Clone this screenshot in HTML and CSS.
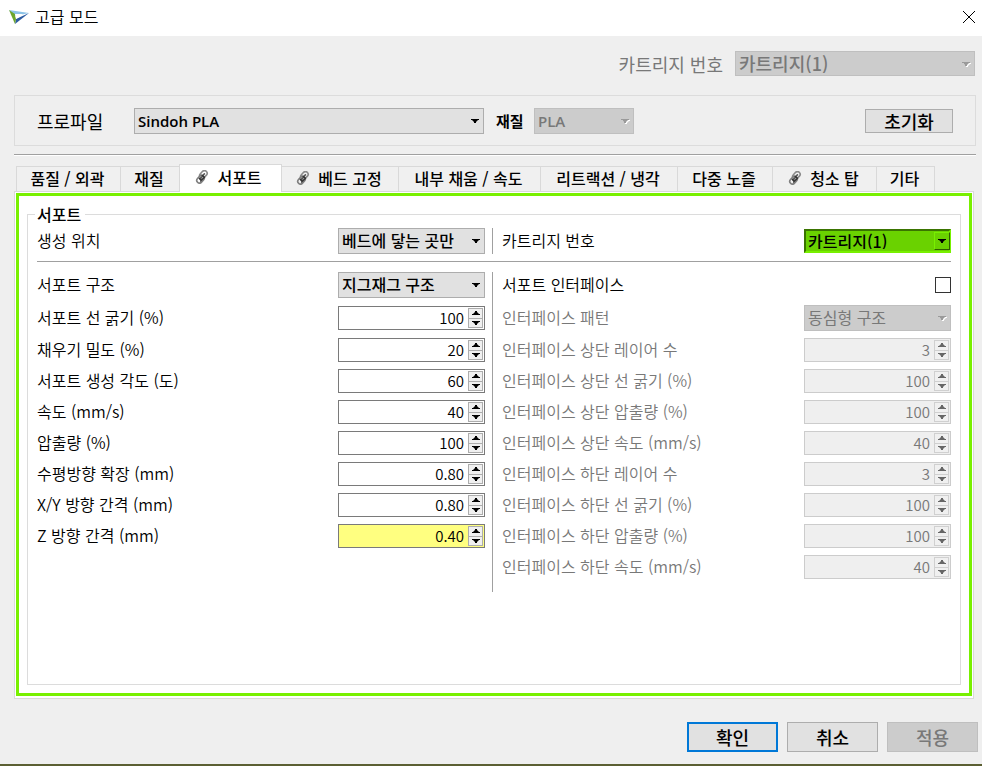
FILE: index.html
```html
<!DOCTYPE html>
<html lang="ko">
<head>
<meta charset="utf-8">
<meta name="viewport" content="width=device-width, initial-scale=1">
<title>고급 모드</title>
<link rel="stylesheet" href="styles.css">
</head>
<body>
<svg class="defs" aria-hidden="true">
  <symbol id="down" viewBox="0 0 8 4"><path d="M0 0h8v1H7L5 3v1H3V3L1 1H0z"/></symbol>
  <symbol id="up" viewBox="0 0 8 4"><path d="M3 0h2v1l2 2h1v1H0V3h1l2-2z"/></symbol>
  <symbol id="clip" viewBox="0 0 14 14">
    <g fill="none" stroke-linecap="round">
      <rect x="5.7" y="0.2" width="5.4" height="8.4" rx="2.7" transform="rotate(42 8.4 4.4)" stroke="#8a8a8a" stroke-width="1.6"/>
      <rect x="2.8" y="5" width="5.4" height="8.4" rx="2.7" transform="rotate(42 5.5 9.2)" stroke="#808080" stroke-width="1.6"/>
      <path d="M9.4 3.8L5 8.9" stroke="#555" stroke-width="1.6"/>
      <path d="M9.6 7.2L5.6 11M7.2 5.4l2.2 1.8M4.2 8.2l2 2" stroke="#333" stroke-width="1.3"/>
    </g>
  </symbol>
</svg>
<header class="titlebar">
  <svg class="logo" viewBox="0 0 20 15" aria-hidden="true">
    <path d="M0 0l20 3-14 3z" fill="#8cc3e8"/>
    <path d="M20 3L6 14l1-5z" fill="#2c5aa0"/>
    <path d="M0 0l6 4 1 5-1 5z" fill="#6ca52c"/>
    <path d="M6 4l8 0-7 5z" fill="#fff"/>
  </svg>
  <h1 class="title">고급 모드</h1>
  <button class="close" aria-label="닫기"><svg viewBox="0 0 12 12"><path d="M0 0l12 12M12 0L0 12" stroke="#000" fill="none"/></svg></button>
</header>
<main class="dialog">
  <div class="cartridge">
    <label for="cart">카트리지 번호</label>
    <span class="combo"><select id="cart" disabled><option>카트리지(1)</option></select><svg><use href="#down"/></svg></span>
  </div>
  <section class="profile">
    <label class="profile-label" for="profile">프로파일</label>
    <span class="combo latin profile-combo"><select id="profile"><option>Sindoh PLA</option></select><svg><use href="#down"/></svg></span>
    <label class="material-label" for="material">재질</label>
    <span class="combo latin material-combo"><select id="material" disabled><option>PLA</option></select><svg><use href="#down"/></svg></span>
    <button class="btn reset">초기화</button>
  </section>
  <hr class="divider">
  <div class="tabs" role="tablist">
    <button class="tab" role="tab">품질 / 외곽</button>
    <button class="tab" role="tab">재질</button>
    <button class="tab active" role="tab" aria-selected="true"><svg><use href="#clip"/></svg>서포트</button>
    <button class="tab" role="tab"><svg><use href="#clip"/></svg>베드 고정</button>
    <button class="tab" role="tab">내부 채움 / 속도</button>
    <button class="tab" role="tab">리트랙션 / 냉각</button>
    <button class="tab" role="tab">다중 노즐</button>
    <button class="tab" role="tab"><svg><use href="#clip"/></svg>청소 탑</button>
    <button class="tab" role="tab">기타</button>
  </div>
  <div class="panel" role="tabpanel">
    <div class="highlight">
      <fieldset class="group">
        <legend>서포트</legend>
        <div class="columns first">
          <div class="fields">
            <div class="row"><label for="pos">생성 위치</label><span class="combo"><select id="pos"><option>베드에 닿는 곳만</option></select><svg><use href="#down"/></svg></span></div>
          </div>
          <div class="fields">
            <div class="row"><label for="cart2">카트리지 번호</label><span class="combo green"><select id="cart2"><option>카트리지(1)</option></select><svg><use href="#down"/></svg></span></div>
          </div>
        </div>
        <div class="columns">
          <div class="fields">
            <div class="row tall"><label for="struct">서포트 구조</label><span class="combo"><select id="struct"><option>지그재그 구조</option></select><svg><use href="#down"/></svg></span></div>
            <div class="row tall"><label for="a1">서포트 선 굵기 (%)</label><span class="spin"><input id="a1" type="number" value="100"><span class="steps"><button aria-label="증가"><svg><use href="#up"/></svg></button><button aria-label="감소"><svg><use href="#down"/></svg></button></span></span></div>
            <div class="row"><label for="a2">채우기 밀도 (%)</label><span class="spin"><input id="a2" type="number" value="20"><span class="steps"><button aria-label="증가"><svg><use href="#up"/></svg></button><button aria-label="감소"><svg><use href="#down"/></svg></button></span></span></div>
            <div class="row"><label for="a3">서포트 생성 각도 (도)</label><span class="spin"><input id="a3" type="number" value="60"><span class="steps"><button aria-label="증가"><svg><use href="#up"/></svg></button><button aria-label="감소"><svg><use href="#down"/></svg></button></span></span></div>
            <div class="row"><label for="a4">속도 (mm/s)</label><span class="spin"><input id="a4" type="number" value="40"><span class="steps"><button aria-label="증가"><svg><use href="#up"/></svg></button><button aria-label="감소"><svg><use href="#down"/></svg></button></span></span></div>
            <div class="row"><label for="a5">압출량 (%)</label><span class="spin"><input id="a5" type="number" value="100"><span class="steps"><button aria-label="증가"><svg><use href="#up"/></svg></button><button aria-label="감소"><svg><use href="#down"/></svg></button></span></span></div>
            <div class="row"><label for="a6">수평방향 확장 (mm)</label><span class="spin"><input id="a6" type="number" step="0.01" value="0.80"><span class="steps"><button aria-label="증가"><svg><use href="#up"/></svg></button><button aria-label="감소"><svg><use href="#down"/></svg></button></span></span></div>
            <div class="row"><label for="a7">X/Y 방향 간격 (mm)</label><span class="spin"><input id="a7" type="number" step="0.01" value="0.80"><span class="steps"><button aria-label="증가"><svg><use href="#up"/></svg></button><button aria-label="감소"><svg><use href="#down"/></svg></button></span></span></div>
            <div class="row"><label for="a8">Z 방향 간격 (mm)</label><span class="spin changed"><input id="a8" type="number" step="0.01" value="0.40"><span class="steps"><button aria-label="증가"><svg><use href="#up"/></svg></button><button aria-label="감소"><svg><use href="#down"/></svg></button></span></span></div>
          </div>
          <div class="fields">
            <div class="row tall"><label for="iface">서포트 인터페이스</label><input class="check" id="iface" type="checkbox"></div>
            <div class="row tall off"><label for="pattern">인터페이스 패턴</label><span class="combo"><select id="pattern" disabled><option>동심형 구조</option></select><svg><use href="#down"/></svg></span></div>
            <div class="row off"><label for="b1">인터페이스 상단 레이어 수</label><span class="spin"><input id="b1" type="number" value="3" disabled><span class="steps"><button aria-label="증가" disabled><svg><use href="#up"/></svg></button><button aria-label="감소" disabled><svg><use href="#down"/></svg></button></span></span></div>
            <div class="row off"><label for="b2">인터페이스 상단 선 굵기 (%)</label><span class="spin"><input id="b2" type="number" value="100" disabled><span class="steps"><button aria-label="증가" disabled><svg><use href="#up"/></svg></button><button aria-label="감소" disabled><svg><use href="#down"/></svg></button></span></span></div>
            <div class="row off"><label for="b3">인터페이스 상단 압출량 (%)</label><span class="spin"><input id="b3" type="number" value="100" disabled><span class="steps"><button aria-label="증가" disabled><svg><use href="#up"/></svg></button><button aria-label="감소" disabled><svg><use href="#down"/></svg></button></span></span></div>
            <div class="row off"><label for="b4">인터페이스 상단 속도 (mm/s)</label><span class="spin"><input id="b4" type="number" value="40" disabled><span class="steps"><button aria-label="증가" disabled><svg><use href="#up"/></svg></button><button aria-label="감소" disabled><svg><use href="#down"/></svg></button></span></span></div>
            <div class="row off"><label for="b5">인터페이스 하단 레이어 수</label><span class="spin"><input id="b5" type="number" value="3" disabled><span class="steps"><button aria-label="증가" disabled><svg><use href="#up"/></svg></button><button aria-label="감소" disabled><svg><use href="#down"/></svg></button></span></span></div>
            <div class="row off"><label for="b6">인터페이스 하단 선 굵기 (%)</label><span class="spin"><input id="b6" type="number" value="100" disabled><span class="steps"><button aria-label="증가" disabled><svg><use href="#up"/></svg></button><button aria-label="감소" disabled><svg><use href="#down"/></svg></button></span></span></div>
            <div class="row off"><label for="b7">인터페이스 하단 압출량 (%)</label><span class="spin"><input id="b7" type="number" value="100" disabled><span class="steps"><button aria-label="증가" disabled><svg><use href="#up"/></svg></button><button aria-label="감소" disabled><svg><use href="#down"/></svg></button></span></span></div>
            <div class="row off"><label for="b8">인터페이스 하단 속도 (mm/s)</label><span class="spin"><input id="b8" type="number" value="40" disabled><span class="steps"><button aria-label="증가" disabled><svg><use href="#up"/></svg></button><button aria-label="감소" disabled><svg><use href="#down"/></svg></button></span></span></div>
          </div>
        </div>
      </fieldset>
    </div>
  </div>
  <footer class="actions">
    <button class="btn primary">확인</button>
    <button class="btn">취소</button>
    <button class="btn" disabled>적용</button>
  </footer>
</main>
</body>
</html>
```
FILE: styles.css
```css
* { box-sizing: border-box; }

body {
  margin: 0;
  min-height: 100vh;
  display: flex;
  flex-direction: column;
  background: #efefef;
  border-bottom: 2px solid #5b5f33;
  color: #000;
  font: 350 16px/20px "Noto Sans CJK KR", sans-serif;
}

button, select, input { font: inherit; color: inherit; margin: 0; border-radius: 0; }
.defs { display: none; }

.titlebar {
  height: 36px;
  padding: 0 7px 2px 9px;
  display: flex;
  align-items: center;
  background: #fff;
}
.logo { width: 20px; height: 15px; }
.title { flex: 1; margin: 0 0 0 6px; padding-bottom: 2px; font-size: 16px; font-weight: 350; }
.close { padding: 0; border: 0; background: none; display: flex; }
.close svg { width: 12px; height: 12px; overflow: visible; }

.dialog { flex: 1; display: flex; flex-direction: column; }

.cartridge {
  display: flex;
  justify-content: flex-end;
  align-items: center;
  gap: 12px;
  padding: 15px 7px 19px;
  font-size: 18px;
  font-weight: 400;
  color: #787878;
}
.cartridge .combo { width: 240px; height: 25px; }

.combo { position: relative; display: block; width: 147px; height: 26px; font-weight: 500; }
.combo select {
  appearance: none;
  display: block;
  width: 100%;
  height: 100%;
  padding: 0 20px 2px 3px;
  border: 1px solid #adadad;
  background: #e1e1e1;
  line-height: 20px;
}
.combo select:disabled { background: #ccc; border-color: #bfbfbf; color: #787878; opacity: 1; }
.combo svg { position: absolute; right: 5px; top: 11px; width: 8px; height: 4px; pointer-events: none; }
.combo select:disabled + svg { fill: #9a9a9a; filter: drop-shadow(1px 1px 0 #fff); }
.off .combo { font-weight: 400; }
.latin { font: 600 15px/20px "Open Sans", sans-serif; }
.latin select { padding-bottom: 0; }
.green { height: 24px; }
.green select { background: #6ad200; border: 2px solid; border-color: #3a7400 #78f000 #78f000 #3a7400; padding-left: 2px; }
.green svg { right: 1px; top: 3px; width: 16px; height: 18px; padding: 6px 3px; border: 1px solid; border-color: #78f000 #2f5e00 #2f5e00 #78f000; }

.profile {
  display: flex;
  align-items: center;
  height: 51px;
  margin: 0 6px 0 14px;
  padding: 0 22px;
  border: 1px solid #dcdcdc;
}
.profile-label { width: 97px; font-size: 18px; font-weight: 400; }
.profile-combo { width: 350px; }
.material-label { margin: 0 8px 0 12px; width: 30px; font-size: 15px; font-weight: 700; }
.material-combo { width: 100px; }

.btn {
  width: 91px;
  height: 30px;
  padding: 0;
  border: 1px solid #adadad;
  background: #e1e1e1;
  font-size: 18px;
  font-weight: 500;
}
.btn:disabled { background: #ccc; border-color: #bfbfbf; color: #787878; }
.primary { border: 2px solid #0078d7; }
.reset { width: 88px; height: 24px; margin-left: auto; line-height: 20px; }

.divider { height: 2px; margin: 8px 6px 8px 14px; border: 0; border-top: 1px solid #a0a0a0; background: #fff; }

.tabs {
  display: grid;
  grid-template-columns: 105fr 59fr 102fr 117fr 142fr 137fr 95fr 104fr 58fr;
  align-items: end;
  height: 27px;
  margin: 0 47px 0 16px;
}
.tab {
  display: flex;
  align-items: center;
  justify-content: center;
  gap: 8px;
  height: 25px;
  padding: 0 2px 2px 0;
  border: 1px solid #d9d9d9;
  border-width: 1px 1px 0 0;
  background: #f0f0f0;
  font-weight: 500;
  white-space: nowrap;
}
.tab:first-child { border-left-width: 1px; }
.tab svg { width: 14px; height: 14px; }
.active { height: 28px; margin: 0 0 -1px -1px; padding: 0 4px 4px 0; border-left-width: 1px; background: #fff; position: relative; }

.panel {
  flex: 1;
  display: flex;
  margin: 0 8px 0 14px;
  padding: 1px 1px 2px;
  border: 1px solid #d9d9d9;
  background: #fff;
}
.highlight { flex: 1; display: flex; padding: 8px; border: 3px solid #78f000; }
.group { flex: 1; min-width: 0; margin: 0; padding: 4px 9px 0; border: 1px solid #dcdcdc; }
legend { margin-left: -2px; padding: 0 4px 0 2px; font-weight: 500; }

.columns { display: grid; grid-template-columns: calc(50% - 2px) 1fr; }
.first { padding-bottom: 7px; margin-bottom: 10px; border-bottom: 1px solid #a0a0a0; }
.fields { display: flex; flex-direction: column; gap: 7px; padding-right: 7px; }
.fields + .fields { padding: 0 0 0 9px; border-left: 1px solid #a0a0a0; }
.columns:not(.first) .fields { padding-bottom: 13px; }
.row { display: flex; align-items: center; justify-content: space-between; height: 24px; white-space: nowrap; }
.row label { padding-bottom: 2px; }
.tall, .first .row { height: 26px; }
.off { color: #787878; }

.spin { display: flex; width: 147px; height: 24px; padding: 1px; border: 1px solid #7a7a7a; background: #fff; }
.spin input {
  appearance: textfield;
  flex: 1;
  min-width: 0;
  padding: 0 4px 0 0;
  border: 0;
  background: none;
  text-align: right;
  font-size: 15px;
}
.spin input::-webkit-inner-spin-button { appearance: none; }
.steps { display: flex; flex-direction: column; width: 15px; background: #f0f0f0; border: 1px solid #adadad; }
.steps button { flex: 1; display: flex; align-items: center; justify-content: center; padding: 0; border: 0; background: none; }
.steps button + button { border-top: 1px solid #adadad; }
.steps svg { width: 8px; height: 4px; }
.changed { background: #ffff80; }
.off .spin { background: #efefef; border-color: #ccc; }
.off .steps, .off .steps button { border-color: #d0d0d0; fill: #666; }

.check { appearance: none; width: 16px; height: 16px; border: 1px solid #333; background: #fff; }

.actions { display: flex; justify-content: flex-end; gap: 9px; padding: 23px 4px 12px; }
```
